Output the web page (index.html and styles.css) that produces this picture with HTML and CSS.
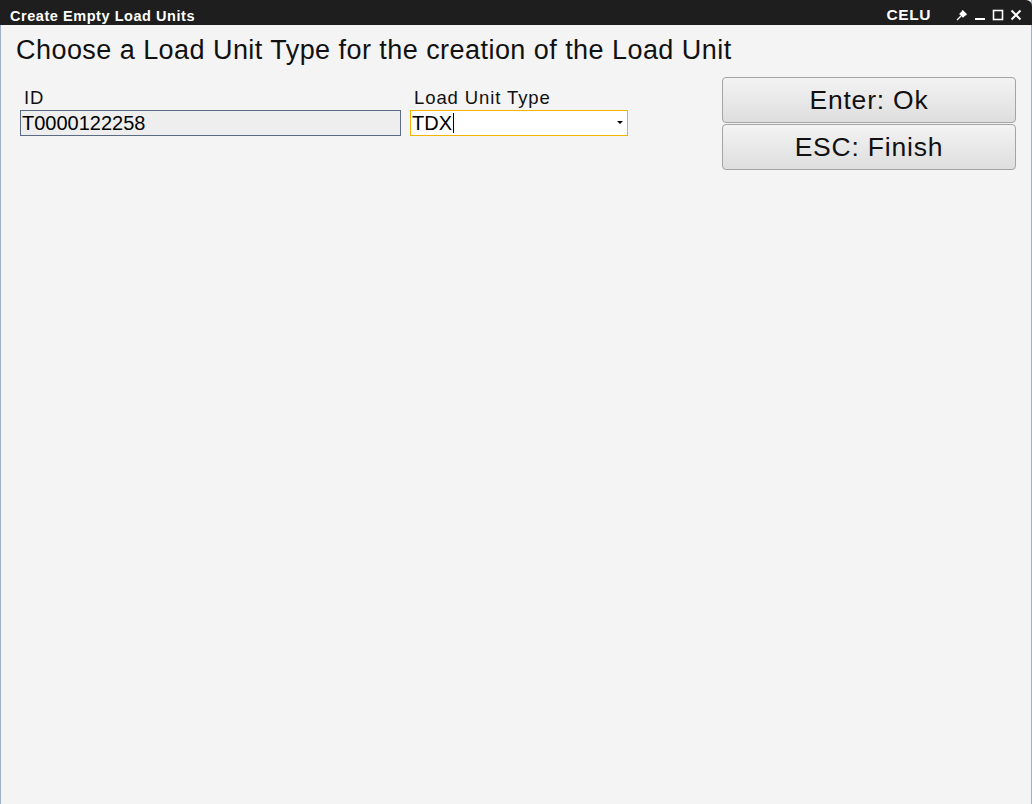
FILE: index.html
```html
<!DOCTYPE html>
<html>
<head>
<meta charset="utf-8">
<link rel="stylesheet" href="styles.css">
</head>
<body>
<div class="window">
  <div class="titlebar">
    <span class="title">Create Empty Load Units</span>
    <span class="code">CELU</span>
    <div class="controls">
      <svg class="ic pin" width="12" height="12" viewBox="0 0 12 12"><path d="M1 11 L5 7" stroke="#fff" stroke-width="1.3"/><path d="M4 5 L7 2 L10 5 L7 8 Z M6 1.5 L10.5 6" fill="#fff" stroke="#fff" stroke-width="1.2"/></svg>
      <svg class="ic" width="12" height="12" viewBox="0 0 12 12"><rect x="1" y="9" width="10" height="2" fill="#fff"/></svg>
      <svg class="ic" width="12" height="12" viewBox="0 0 12 12"><rect x="1.5" y="1.5" width="9" height="9" fill="none" stroke="#fff" stroke-width="1.6"/></svg>
      <svg class="ic" width="12" height="12" viewBox="0 0 12 12"><path d="M1.5 1.5 L10.5 10.5 M10.5 1.5 L1.5 10.5" stroke="#fff" stroke-width="2"/></svg>
    </div>
  </div>
  <div class="content">
    <h1 class="heading">Choose a Load Unit Type for the creation of the Load Unit</h1>
    <div class="row">
      <div class="fields">
        <div class="field field-id">
          <label class="lbl">ID</label>
          <div class="input readonly">T0000122258</div>
        </div>
        <div class="field field-type">
          <label class="lbl">Load Unit Type</label>
          <div class="input combo"><span class="val">TDX</span><span class="caret"></span><span class="arrow"></span></div>
        </div>
      </div>
      <div class="buttons">
        <button class="btn">Enter: Ok</button>
        <button class="btn">ESC: Finish</button>
      </div>
    </div>
  </div>
</div>
</body>
</html>
```
FILE: styles.css
```css
html, body { margin: 0; padding: 0; }
body { width: 1032px; height: 804px; overflow: hidden; font-family: "Liberation Sans", Arial, sans-serif; background: #f4f4f4; }
.window { width: 1032px; height: 804px; box-sizing: border-box; display: flex; flex-direction: column; background: #f4f4f4; border-left: 1px solid #9fb0c6; border-right: 1px solid #9fb0c6; }
.titlebar { height: 25px; background: #1e1e1e; color: #fff; display: flex; align-items: center; margin: 0 -1px; border-top-right-radius: 6px; }
.title { font-weight: bold; font-size: 14.5px; letter-spacing: 0.55px; padding-left: 10px; padding-top: 6px; flex: 1; }
.code { font-weight: bold; font-size: 15.5px; letter-spacing: 0.6px; padding-top: 5px; margin-right: 25px; }
.controls { display: flex; align-items: center; gap: 6px; padding-right: 10px; padding-top: 4px; }
.ic { display: block; }
.content { flex: 1; padding: 11px 15px 0 15px; }
.heading { margin: 0; font-weight: normal; font-size: 27px; letter-spacing: 0.45px; color: #111; line-height: 28px; }
.row { display: flex; margin-top: 13px; }
.fields { display: flex; flex: 1; padding-top: 10px; padding-left: 4px; }
.field { display: flex; flex-direction: column; }
.field-id { width: 381px; margin-right: 9px; }
.field-type { width: 218px; }
.lbl { font-size: 18.5px; letter-spacing: 0.9px; line-height: 21px; color: #111; padding-left: 4px; margin-bottom: 2px; }
.input { height: 26px; box-sizing: border-box; font-size: 20px; line-height: 24px; color: #000; display: flex; align-items: center; }
.readonly { background: #eeeeee; border: 1px solid #5c6b84; padding-left: 1px; }
.combo { background: #fff; border: 1px solid #f2b400; padding-left: 1px; position: relative; }
.caret { width: 1px; height: 20px; background: #000; margin-left: 1px; }
.arrow { position: absolute; right: 4px; top: 10px; width: 0; height: 0; border-left: 3px solid transparent; border-right: 3px solid transparent; border-top: 3px solid #000; }
.buttons { width: 294px; display: flex; flex-direction: column; gap: 1px; margin-left: 1px; }
.btn { height: 46px; box-sizing: border-box; border: 1px solid #a4a4a4; border-radius: 4px; background: linear-gradient(#f3f3f3, #dedede); font-family: "Liberation Sans", Arial, sans-serif; font-size: 26.5px; letter-spacing: 0.8px; color: #111; padding: 0; }
```
